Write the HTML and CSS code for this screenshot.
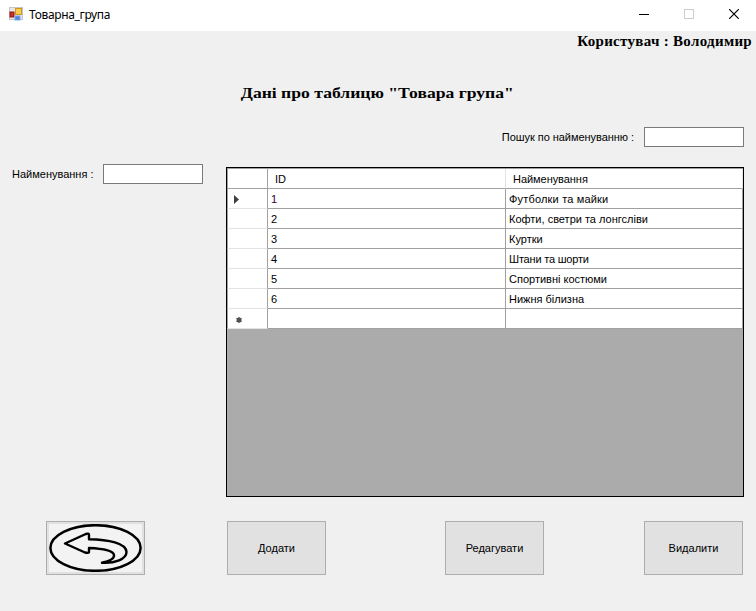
FILE: index.html
```html
<!DOCTYPE html>
<html lang="uk">
<head>
<meta charset="utf-8">
<title>Товарна_група</title>
<link rel="stylesheet" href="styles.css">
</head>
<body>
<header class="titlebar">
  <svg class="app-icon" width="14" height="14" viewBox="0 0 14 14">
    <rect x=".5" y=".5" width="13" height="12" fill="#e8e8e8" stroke="#c4c4c4"/>
    <rect x="6.5" y="1.5" width="6" height="6" fill="#fbcb4d" stroke="#c99a22"/>
    <rect x="1" y="5" width="4" height="5" fill="#c9302c" stroke="#8f1616"/>
    <rect x="6" y="9" width="5" height="4" fill="#4f86e0" stroke="#7fa6e6"/>
  </svg>
  <span class="caption">Товарна_група</span>
  <div class="controls">
    <svg width="10" height="10" viewBox="0 0 10 10"><path d="M0 5.5H10" stroke="#000"/></svg>
    <svg width="10" height="10" viewBox="0 0 10 10"><rect x=".5" y=".5" width="9" height="9" fill="none" stroke="#ccc"/></svg>
    <svg width="10" height="10" viewBox="0 0 10 10"><path d="M.2 .2L9.8 9.8M9.8 .2L.2 9.8" stroke="#000" stroke-width="1.2"/></svg>
  </div>
</header>
<main>
  <div class="user"><span>Користувач : Володимир</span></div>
  <h1><span>Дані про таблицю "Товара група"</span></h1>
  <div class="search">
    <label for="search">Пошук по найменуванню :</label>
    <input id="search" type="text">
  </div>
  <div class="content">
    <div class="field">
      <label for="name">Найменування :</label>
      <input id="name" type="text">
    </div>
    <div class="grid-view">
      <div class="row head"><div class="mark"></div><div class="cell">ID</div><div class="cell">Найменування</div></div>
      <div class="row"><div class="mark"><svg width="5" height="9" viewBox="0 0 5 9"><path d="M0 0L5 4.500L0 9Z" fill="#404040"/></svg></div><div class="cell current">1</div><div class="cell wide">Футболки та майки</div></div>
      <div class="row"><div class="mark"></div><div class="cell">2</div><div class="cell">Кофти, светри та лонгсліви</div></div>
      <div class="row"><div class="mark"></div><div class="cell">3</div><div class="cell">Куртки</div></div>
      <div class="row"><div class="mark"></div><div class="cell">4</div><div class="cell tight">Штани та шорти</div></div>
      <div class="row"><div class="mark"></div><div class="cell">5</div><div class="cell">Спортивні костюми</div></div>
      <div class="row"><div class="mark"></div><div class="cell">6</div><div class="cell">Нижня білизна</div></div>
      <div class="row"><div class="mark new"><svg width="6" height="6" viewBox="0 0 6 6"><circle cx="3" cy="3" r="2.500" fill="#4a4a4a"/><path d="M3 0V6M.3 1.300L5.700 4.700M5.700 1.300L.3 4.700" stroke="#555"/></svg></div><div class="cell"></div><div class="cell"></div></div>
    </div>
  </div>
  <div class="actions">
    <button class="back" aria-label="Назад">
      <svg width="93" height="48" viewBox="0 0 93 48">
        <rect width="93" height="48" fill="#f3f3f3"/>
        <ellipse cx="46.500" cy="24" rx="45.100" ry="22.800" fill="none" stroke="#000" stroke-width="2.500"/>
        <path d="M16 19.500L36.800 10Q40 9 40 11V15.200C59 15.500 77.500 19 77.500 28C77.500 35 66 39.500 53 38.700C61 37 65.500 34 65 31C64 26 52 24.500 40 24V28Q39.500 29.500 36 28.500Z" fill="#f3f3f3" stroke="#000" stroke-width="2.400" stroke-linejoin="round"/>
      </svg>
    </button>
    <button>Додати</button>
    <button>Редагувати</button>
    <button>Видалити</button>
  </div>
</main>
</body>
</html>
```
FILE: styles.css
```css
* { box-sizing: border-box; }
body {
  margin: 0;
  width: 756px;
  height: 611px;
  overflow: hidden;
  background: #f0f0f0;
  color: #000;
  font: 11px/14px "Liberation Sans", Arial, sans-serif;
}
span, label { white-space: nowrap; }
svg { display: block; flex: none; }
.titlebar {
  height: 31px;
  display: flex;
  align-items: center;
  padding: 0 17px 3px 9px;
  background: #fff;
}
.caption {
  margin: 2px 0 0 6px;
  font: 12px/16px "Noto Sans", sans-serif;
  letter-spacing: -0.36px;
}
.controls { display: flex; gap: 35px; margin-left: auto; }
.user, h1 {
  margin: 0;
  font: bold 15px/20px "Liberation Serif", serif;
}
.user {
  display: flex;
  justify-content: flex-end;
  padding-right: 4px;
  height: 20px;
  letter-spacing: 0.3px;
}
h1 {
  display: flex;
  justify-content: center;
  padding: 32px 2px 0 0;
  height: 76px;
}
h1 span { display: block; height: 20px; transform: scaleX(1.174); }
input {
  width: 100px;
  height: 20px;
  margin: 0;
  padding: 1px 3px;
  border: 1px solid #7a7a7a;
  border-radius: 0;
  background: #fff;
  font: inherit;
}
.search {
  display: flex;
  align-items: center;
  justify-content: flex-end;
  gap: 10px;
  padding-right: 12px;
}
.search label { letter-spacing: -0.05px; }
.content {
  display: flex;
  justify-content: space-between;
  height: 367px;
  padding: 17px 12px 0;
}
.field { display: flex; align-items: center; gap: 9px; height: 20px; }
.grid-view {
  width: 518px;
  height: 330px;
  margin-top: 3px;
  border: 1px solid #000;
  background: #ababab;
}
.row {
  display: grid;
  grid-template-columns: 41px 238px 237px;
  height: 20px;
}
.head { height: 21px; border-top: 1px solid #a0a0a0; }
.mark {
  display: flex;
  align-items: center;
  padding: 1px 0 0 6px;
  border: 1px solid #a0a0a0;
  border-top: 0;
  border-bottom-color: #e3e3e3;
  background: #fff;
}
.mark.new { padding: 3px 0 0 8px; }
.cell {
  display: flex;
  align-items: center;
  padding: 1px 0 0 3px;
  border: solid #a0a0a0;
  border-width: 0 1px 1px 0;
  background: #fff;
}
.cell.current { color: #300030; }
.cell.wide { letter-spacing: 0.18px; }
.cell.tight { letter-spacing: -0.2px; }
.head .mark { border-bottom-color: #a0a0a0; }
.head .cell { padding-left: 7px; border-right-color: #e3e3e3; letter-spacing: -0.05px; }
.actions {
  display: grid;
  grid-template-columns: 181px 218px 199px 99px;
  padding: 7px 13px 0 46px;
}
button {
  display: flex;
  align-items: center;
  justify-content: center;
  width: 99px;
  height: 54px;
  margin: 0;
  padding: 0;
  border: 1px solid #adadad;
  background: #e1e1e1;
  color: #000;
  font: inherit;
}
```
